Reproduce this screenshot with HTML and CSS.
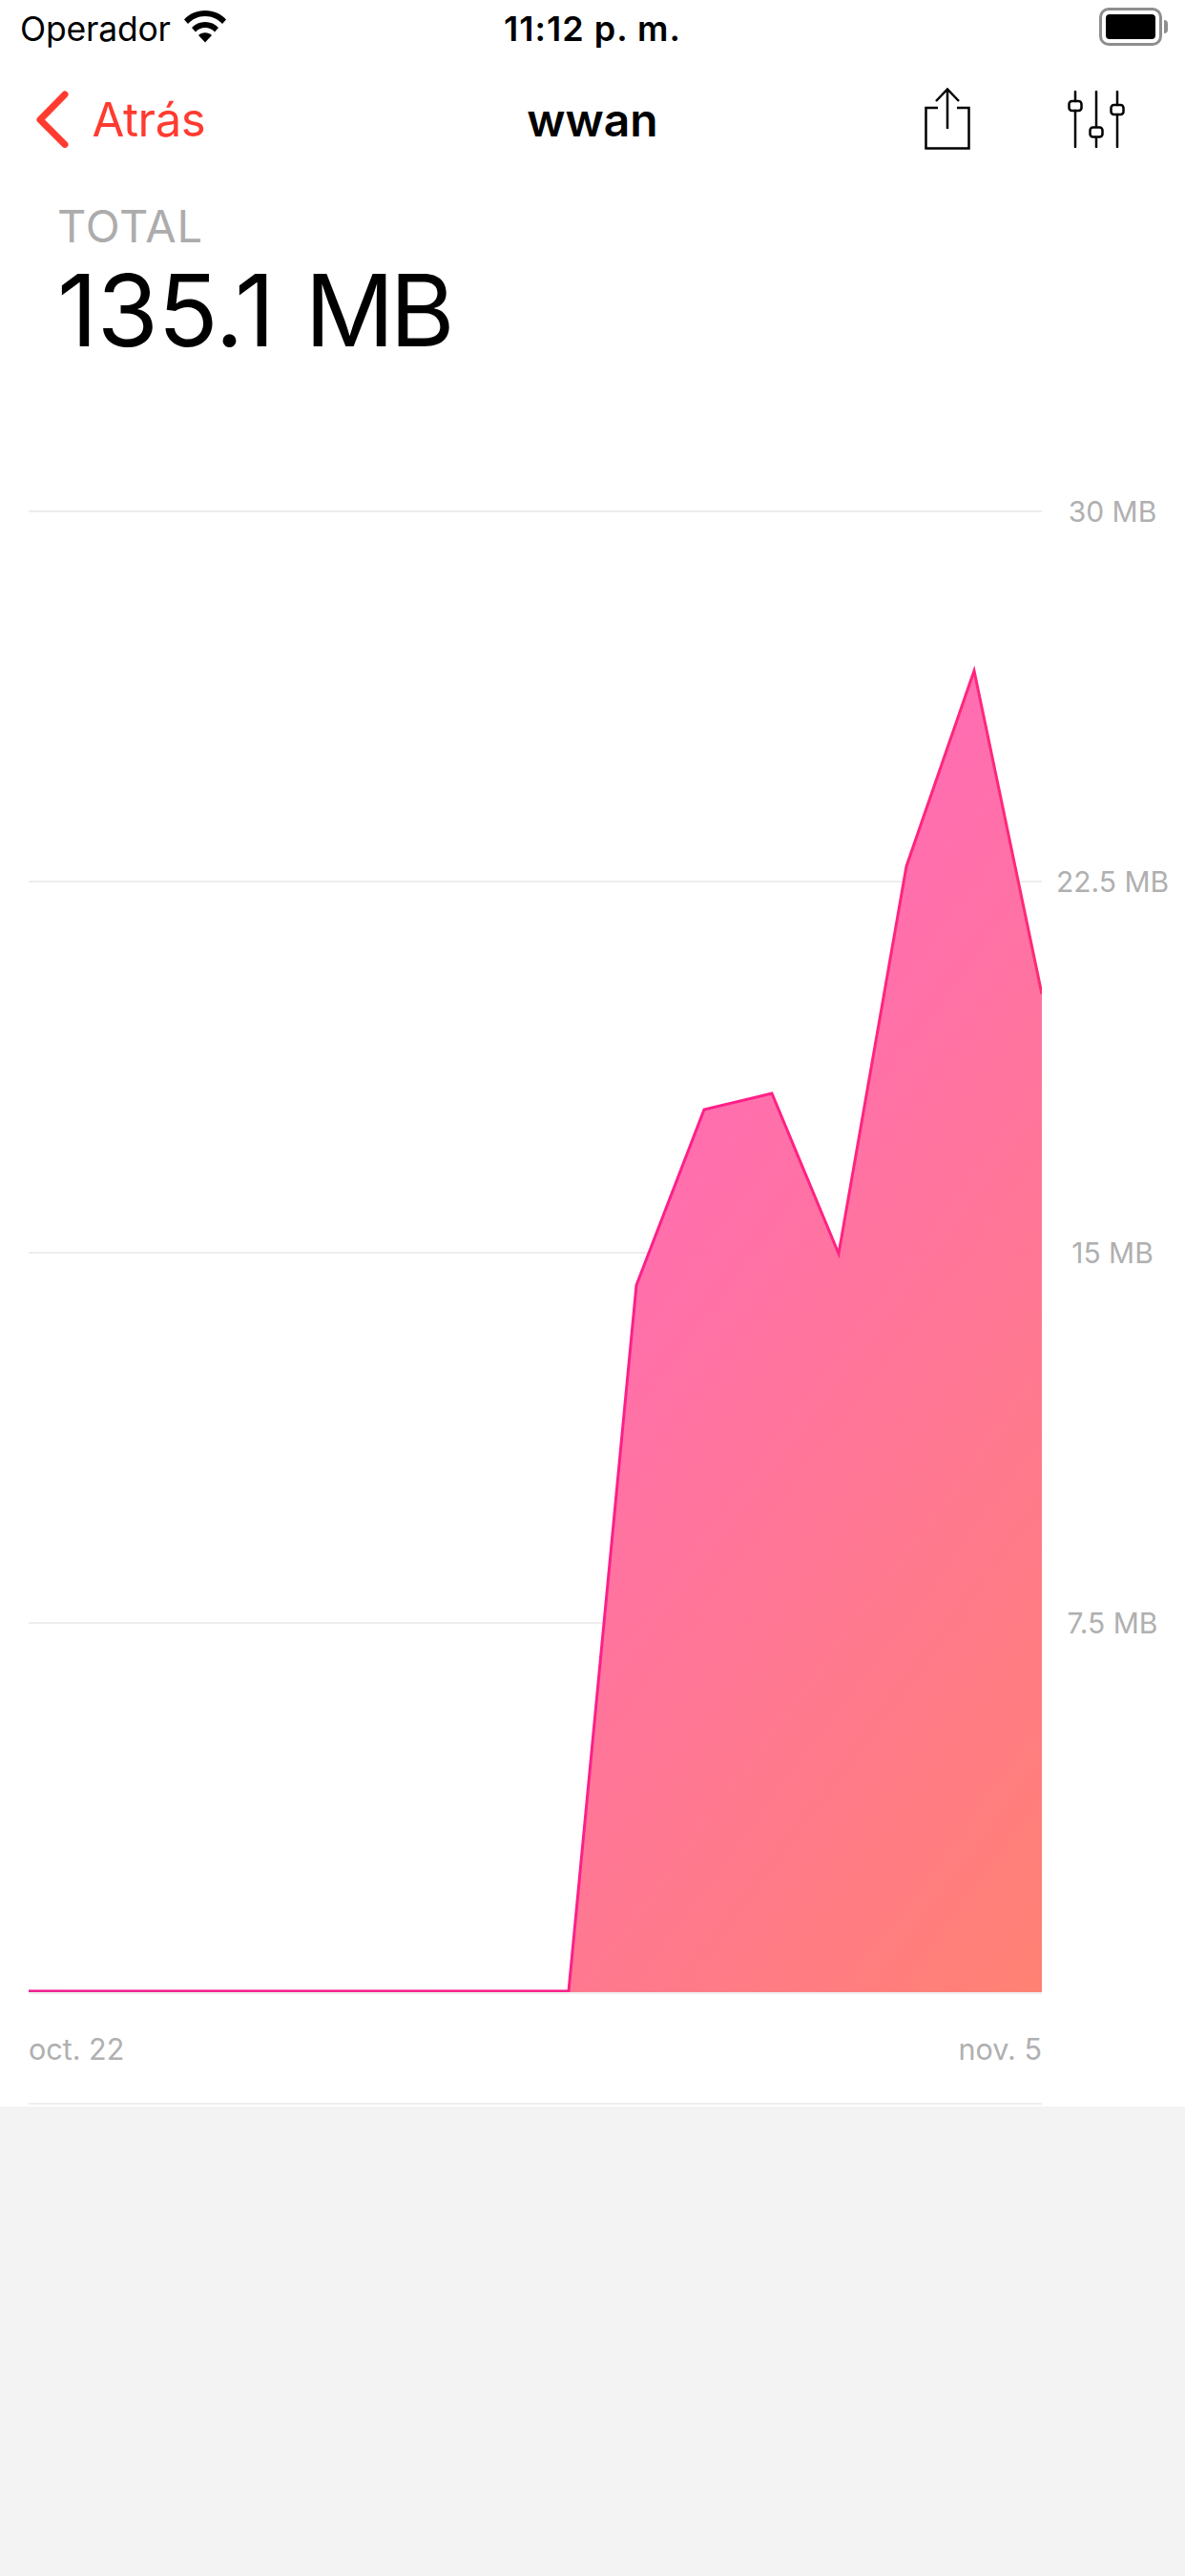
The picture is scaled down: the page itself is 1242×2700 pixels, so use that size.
FILE: index.html
```html
<!DOCTYPE html>
<html lang="es">
<head>
<meta charset="utf-8">
<title>wwan</title>
<link rel="stylesheet" href="styles.css">
</head>
<body>
<main class="screen">
  <header class="status-bar">
    <div class="status-left">
      <span class="carrier">Operador</span>
      <svg class="wifi" width="46" height="36" viewBox="0 0 46 36">
        <path d="M1 11.500C6.500 5.500 14 2 23 2s16.500 3.500 22 9.500l-4 4.500C36.500 11 30.500 8 23 8S9.500 11 5 16Z"/>
        <path d="M9 20C12.500 16 17.500 14 23 14s10.500 2 14 6l-4 4.500C30.500 21.500 27 20 23 20s-7.500 1.500-10 4.500Z"/>
        <path d="M16 28c1.800-1.800 4.300-2.800 7-2.800s5.200 1 7 2.800l-7 7.500Z"/>
      </svg>
    </div>
    <span class="clock">11:12 p. m.</span>
    <div class="battery">
      <div class="battery-shell"><div class="battery-fill"></div></div>
      <div class="battery-cap"></div>
    </div>
  </header>

  <nav class="nav-bar">
    <div class="nav-back">
      <svg width="40" height="60" viewBox="0 0 40 60" class="chevron">
        <path d="M31 4 5 30.500l26 26" fill="none" stroke="#ff3b30" stroke-width="7" stroke-linecap="round" stroke-linejoin="round"/>
      </svg>
      <span class="back-label">Atrás</span>
    </div>
    <h1 class="nav-title">wwan</h1>
    <div class="nav-actions">
      <svg class="icon-share" width="50" height="66" viewBox="0 0 50 66">
        <path d="M14 21H1.500v42.500h45V21H34M24 1.500V43M12 14 24 1.500 36 14" fill="none" stroke="#000" stroke-width="2.500"/>
      </svg>
      <svg class="icon-sliders" width="60" height="60" viewBox="0 0 60 60">
        <g fill="none" stroke="#000" stroke-width="2.500" stroke-linecap="round">
          <path d="M8 1v10M8 21v38M30 1v37M30 49v10M52 1v14M52 25v34"/>
          <rect x="1.500" y="11" width="13" height="10" rx="3"/>
          <rect x="23.500" y="38.500" width="13" height="10" rx="3"/>
          <rect x="45.500" y="15" width="13" height="10" rx="3"/>
        </g>
      </svg>
    </div>
  </nav>

  <section class="summary">
    <div class="summary-label">TOTAL</div>
    <div class="summary-value"><span class="summary-number">135.1</span> <span class="summary-unit">MB</span></div>
  </section>

  <section class="chart">
    <div class="plot">
      <div class="grid-row"><span class="grid-line"></span><span class="grid-label">30 MB</span></div>
      <div class="grid-row"><span class="grid-line"></span><span class="grid-label">22.5 MB</span></div>
      <div class="grid-row"><span class="grid-line"></span><span class="grid-label">15 MB</span></div>
      <div class="grid-row"><span class="grid-line"></span><span class="grid-label">7.5 MB</span></div>
      <div class="grid-base"></div>
      <svg class="series" width="1062" height="1552" viewBox="0 0 1062 1552">
        <defs>
          <linearGradient id="area-fill" gradientUnits="userSpaceOnUse" x1="670" y1="614" x2="1366" y2="1133">
            <stop offset="0" stop-color="#ff69af"/>
            <stop offset="1" stop-color="#ff7d6f"/>
          </linearGradient>
          <linearGradient id="area-stroke" gradientUnits="userSpaceOnUse" x1="0" y1="1000" x2="1366" y2="1133">
            <stop offset="0" stop-color="#ee1f92"/>
            <stop offset=".5" stop-color="#ff1f88"/>
            <stop offset="1" stop-color="#ff3560"/>
          </linearGradient>
        </defs>
        <path d="M566 1552 637 811 708 627 779 610 849 778 920 372 991 167 1062 506V1552Z" fill="url(#area-fill)" fill-opacity=".97"/>
        <path d="M0 1551H566L637 811 708 627 779 610 849 778 920 372 991 167 1062 506" fill="none" stroke="url(#area-stroke)" stroke-width="3" stroke-linejoin="miter" stroke-miterlimit="8"/>
      </svg>
    </div>
    <div class="axis">
      <span>oct. 22</span>
      <span>nov. 5</span>
    </div>
    <div class="axis-rule"></div>
  </section>

  <div class="footer-fill"></div>
</main>
</body>
</html>
```

FILE: styles.css
```css
* { box-sizing: border-box; }

html, body {
  margin: 0;
  padding: 0;
}

body {
  width: 1242px;
  height: 2700px;
  background: #f3f3f3;
  font-family: Inter, "Liberation Sans", sans-serif;
  overflow: hidden;
}

.screen {
  display: flex;
  flex-direction: column;
  height: 2700px;
}

/* Status bar */
.status-bar {
  position: relative;
  display: flex;
  align-items: center;
  justify-content: space-between;
  height: 60px;
  padding: 0 18px 0 21px;
  background: #fff;
}

.status-left {
  display: flex;
  align-items: center;
  gap: 13px;
}

.carrier {
  font-size: 35.5px;
  color: #000;
  letter-spacing: -0.2px;
}

.wifi { margin-top: -6px; }

.clock {
  position: absolute;
  left: 0;
  right: 0;
  text-align: center;
  font-size: 36px;
  font-weight: 600;
  letter-spacing: 1px;
  color: #000;
}

.battery {
  display: flex;
  align-items: center;
  gap: 2px;
  margin-top: -4px;
}

.battery-shell {
  width: 66px;
  height: 40px;
  border: 3px solid #8e8e8e;
  border-radius: 10px;
  padding: 4px;
  background: #fff;
}

.battery-fill {
  height: 100%;
  background: #000;
  border-radius: 4px;
}

.battery-cap {
  width: 4px;
  height: 14px;
  background: #8e8e8e;
  border-radius: 0 4px 4px 0;
}

/* Navigation bar */
.nav-bar {
  position: relative;
  display: flex;
  align-items: center;
  justify-content: space-between;
  height: 130px;
  padding: 0 63px 0 37px;
  background: #fff;
}

.nav-back {
  display: flex;
  align-items: center;
  gap: 19.5px;
}

.back-label {
  font-size: 49px;
  color: #ff3b30;
  letter-spacing: -0.4px;
}

.nav-title {
  position: absolute;
  left: 0;
  width: 1242px;
  margin: 0;
  text-align: center;
  font-size: 48px;
  font-weight: 600;
  color: #000;
}

.nav-actions {
  display: flex;
  align-items: center;
  gap: 100px;
}

/* Total summary */
.summary {
  height: 242px;
  padding: 25px 0 0 60px;
  background: #fff;
}

.summary-label {
  font-size: 47px;
  line-height: 44px;
  color: #acacac;
  font-weight: 400;
  letter-spacing: 0.8px;
}

.summary-value {
  margin: 16px 0 0 0;
  font-size: 104px;
  line-height: 100px;
  color: #000;
  font-weight: 400;
  word-spacing: 2.5px;
}

.summary-number { letter-spacing: -0.5px; }

.summary-unit { letter-spacing: -5px; }

/* Chart */
.chart {
  height: 1776px;
  padding-top: 103px;
  background: #fff;
}

.plot {
  position: relative;
  height: 1555px;
}

.grid-row {
  position: relative;
  display: flex;
  height: 388.25px;
}

.grid-line {
  width: 1062px;
  height: 2px;
  margin-left: 30px;
  background: #ededed;
}

.grid-base {
  width: 1062px;
  height: 2px;
  margin-left: 30px;
  background: #ededed;
}

.grid-label {
  position: absolute;
  left: 1092px;
  width: 148px;
  top: -16px;
  text-align: center;
  font-size: 30px;
  line-height: 34px;
  color: #b0b0b0;
  font-weight: 400;
}

.series {
  position: absolute;
  left: 30px;
  top: 1px;
}

.axis {
  display: flex;
  justify-content: space-between;
  width: 1062px;
  margin: 41px 0 0 30px;
  font-size: 30.5px;
  line-height: 34px;
  color: #b0b0b0;
  font-weight: 400;
}

.axis-rule {
  width: 1062px;
  height: 2px;
  margin: 39px 0 0 30px;
  background: #eeeeee;
}

.footer-fill {
  flex: 1;
  background: #f3f3f3;
}
```
